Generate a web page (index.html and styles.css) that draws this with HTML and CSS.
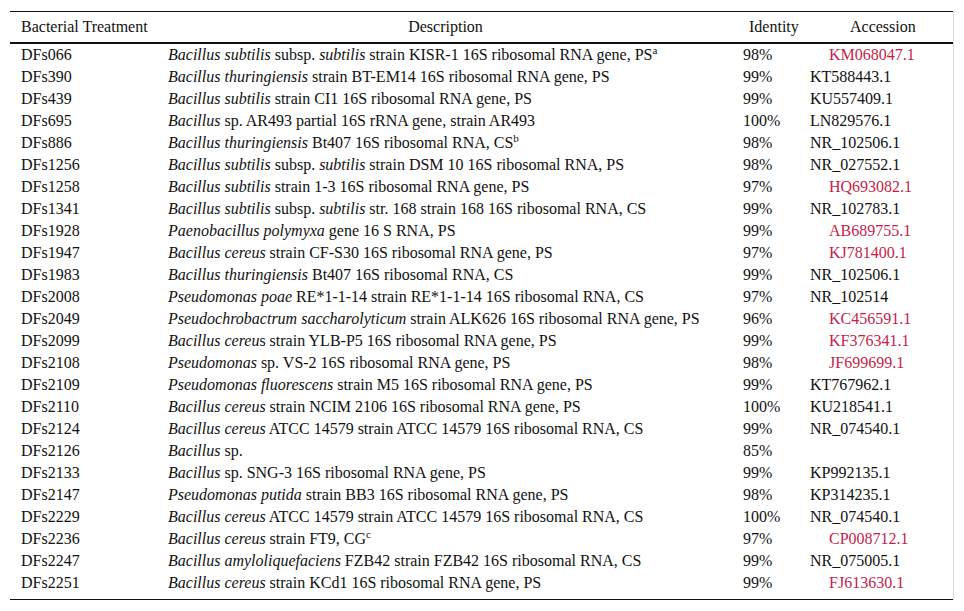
FILE: index.html
```html
<!DOCTYPE html>
<html>
<head>
<meta charset="utf-8">
<link rel="stylesheet" href="styles.css">
</head>
<body>
<div class="wrap">
<table class="data">
<colgroup><col class="c1"><col class="c2"><col class="c3"><col class="c4"></colgroup>
<thead>
<tr><th class="h1">Bacterial Treatment</th><th class="h2">Description</th><th class="h3">Identity</th><th class="h4">Accession</th></tr>
</thead>
<tbody>
<tr><td>DFs066</td><td><i>Bacillus subtilis</i> subsp. <i>subtilis</i> strain KISR-1 16S ribosomal RNA gene, PS<sup>a</sup></td><td>98%</td><td><span class="link">KM068047.1</span></td></tr>
<tr><td>DFs390</td><td><i>Bacillus thuringiensis</i> strain BT-EM14 16S ribosomal RNA gene, PS</td><td>99%</td><td>KT588443.1</td></tr>
<tr><td>DFs439</td><td><i>Bacillus subtilis</i> strain CI1 16S ribosomal RNA gene, PS</td><td>99%</td><td>KU557409.1</td></tr>
<tr><td>DFs695</td><td><i>Bacillus</i> sp. AR493 partial 16S rRNA gene, strain AR493</td><td>100%</td><td>LN829576.1</td></tr>
<tr><td>DFs886</td><td><i>Bacillus thuringiensis</i> Bt407 16S ribosomal RNA, CS<sup>b</sup></td><td>98%</td><td>NR_102506.1</td></tr>
<tr><td>DFs1256</td><td><i>Bacillus subtilis</i> subsp. <i>subtilis</i> strain DSM 10 16S ribosomal RNA, PS</td><td>98%</td><td>NR_027552.1</td></tr>
<tr><td>DFs1258</td><td><i>Bacillus subtilis</i> strain 1-3 16S ribosomal RNA gene, PS</td><td>97%</td><td><span class="link">HQ693082.1</span></td></tr>
<tr><td>DFs1341</td><td><i>Bacillus subtilis</i> subsp. <i>subtilis</i> str. 168 strain 168 16S ribosomal RNA, CS</td><td>99%</td><td>NR_102783.1</td></tr>
<tr><td>DFs1928</td><td><i>Paenobacillus polymyxa</i> gene 16 S RNA, PS</td><td>99%</td><td><span class="link">AB689755.1</span></td></tr>
<tr><td>DFs1947</td><td><i>Bacillus cereus</i> strain CF-S30 16S ribosomal RNA gene, PS</td><td>97%</td><td><span class="link">KJ781400.1</span></td></tr>
<tr><td>DFs1983</td><td><i>Bacillus thuringiensis</i> Bt407 16S ribosomal RNA, CS</td><td>99%</td><td>NR_102506.1</td></tr>
<tr><td>DFs2008</td><td><i>Pseudomonas poae</i> RE*1-1-14 strain RE*1-1-14 16S ribosomal RNA, CS</td><td>97%</td><td>NR_102514</td></tr>
<tr><td>DFs2049</td><td><i>Pseudochrobactrum saccharolyticum</i> strain ALK626 16S ribosomal RNA gene, PS</td><td>96%</td><td><span class="link">KC456591.1</span></td></tr>
<tr><td>DFs2099</td><td><i>Bacillus cereu</i>s strain YLB-P5 16S ribosomal RNA gene, PS</td><td>99%</td><td><span class="link">KF376341.1</span></td></tr>
<tr><td>DFs2108</td><td><i>Pseudomonas</i> sp. VS-2 16S ribosomal RNA gene, PS</td><td>98%</td><td><span class="link">JF699699.1</span></td></tr>
<tr><td>DFs2109</td><td><i>Pseudomonas fluorescens</i> strain M5 16S ribosomal RNA gene, PS</td><td>99%</td><td>KT767962.1</td></tr>
<tr><td>DFs2110</td><td><i>Bacillus cereus</i> strain NCIM 2106 16S ribosomal RNA gene, PS</td><td>100%</td><td>KU218541.1</td></tr>
<tr><td>DFs2124</td><td><i>Bacillus cereus</i> ATCC 14579 strain ATCC 14579 16S ribosomal RNA, CS</td><td>99%</td><td>NR_074540.1</td></tr>
<tr><td>DFs2126</td><td><i>Bacillus</i> sp.</td><td>85%</td><td></td></tr>
<tr><td>DFs2133</td><td><i>Bacillus</i> sp. SNG-3 16S ribosomal RNA gene, PS</td><td>99%</td><td>KP992135.1</td></tr>
<tr><td>DFs2147</td><td><i>Pseudomonas putida</i> strain BB3 16S ribosomal RNA gene, PS</td><td>98%</td><td>KP314235.1</td></tr>
<tr><td>DFs2229</td><td><i>Bacillus cereus</i> ATCC 14579 strain ATCC 14579 16S ribosomal RNA, CS</td><td>100%</td><td>NR_074540.1</td></tr>
<tr><td>DFs2236</td><td><i>Bacillus cereus</i> strain FT9, CG<sup>c</sup></td><td>97%</td><td><span class="link">CP008712.1</span></td></tr>
<tr><td>DFs2247</td><td><i>Bacillus amyloliquefaciens</i> FZB42 strain FZB42 16S ribosomal RNA, CS</td><td>99%</td><td>NR_075005.1</td></tr>
<tr class="last"><td>DFs2251</td><td><i>Bacillus cereus</i> strain KCd1 16S ribosomal RNA gene, PS</td><td>99%</td><td><span class="link">FJ613630.1</span></td></tr>
</tbody>
</table>
</div>
</body>
</html>
```
FILE: styles.css
```css
html, body {
  margin: 0;
  padding: 0;
  background: #fff;
}
body {
  font-family: "Liberation Serif", "Times New Roman", serif;
  font-size: 16px;
  color: #111;
}
.wrap {
  margin: 11px 0 0 10px;
  width: 943px;
  border-right: 1px solid #dcdcdc;
}
.data {
  width: 943px;
  border-collapse: collapse;
  table-layout: fixed;
  border-top: 1px solid #111;
  border-bottom: 1px solid #111;
}
.c1 { width: 148px; }
.c2 { width: 575px; }
.c3 { width: 67px; }
.c4 { width: 153px; }
.data th {
  font-weight: normal;
  height: 30px;
  padding: 0;
  border-bottom: 2px solid #111;
  text-align: left;
  white-space: nowrap;
  line-height: 30px;
}
.data th.h1 { padding-left: 11px; }
.data th.h2 { text-align: center; }
.data th.h3 { padding-left: 16px; }
.data th.h4 { padding-left: 50px; }
.data td {
  height: 22px;
  line-height: 22px;
  padding: 0 0 0 10px;
  white-space: nowrap;
  vertical-align: middle;
}
.data td:first-child { padding-left: 11px; }
.data tr.last td { height: 27px; vertical-align: top; }
.data sup {
  font-size: 11px;
  line-height: 0;
  vertical-align: 6px;
}
.link {
  color: #c41e4a;
  padding-left: 19px;
}
```
